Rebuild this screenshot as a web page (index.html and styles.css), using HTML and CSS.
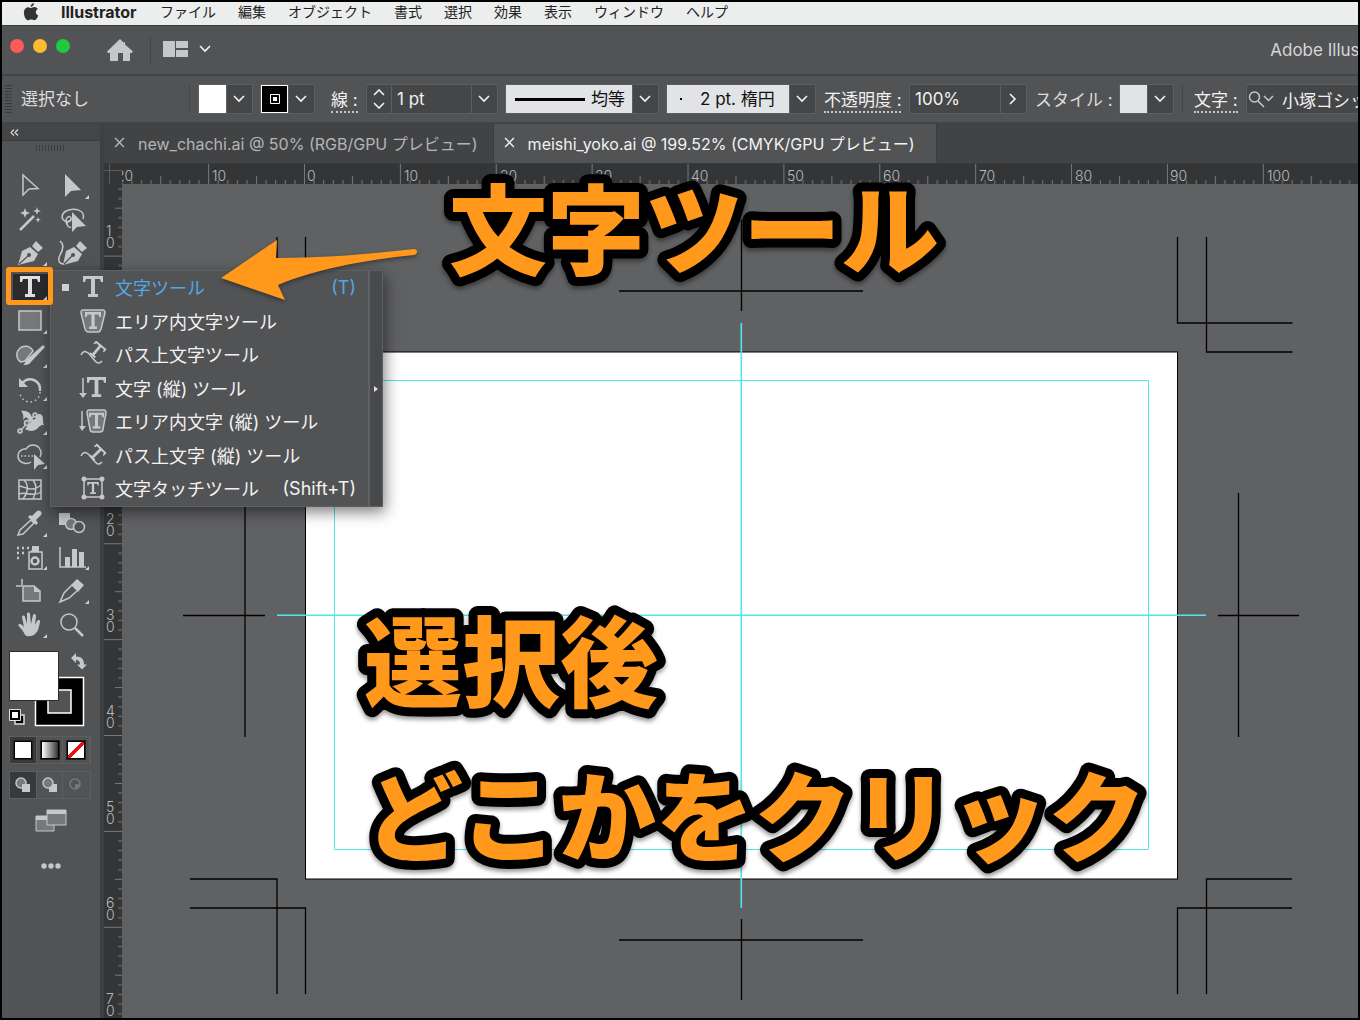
FILE: index.html
```html
<!DOCTYPE html>
<html lang="ja">
<head>
<meta charset="utf-8">
<title>Adobe Illustrator</title>
<link rel="stylesheet" href="styles.css">
</head>
<body>
<svg class="defs" width="0" height="0" aria-hidden="true">
  <symbol id="type" viewBox="0 0 20 21"><path fill="currentColor" d="M0 0h20v6h-2l-1-3h-5v15h3v3H5v-3h3V3H3L2 6H0z"/></symbol>
  <symbol id="down" viewBox="0 0 12 8"><path d="M1 1l5 5 5-5" fill="none" stroke="currentColor" stroke-width="1.600"/></symbol>
  <symbol id="close" viewBox="0 0 10 10"><path d="M1 1l8 8M9 1L1 9" fill="none" stroke="currentColor" stroke-width="1.3"/></symbol>
</svg>
<div class="app">
  <nav class="menubar">
    <svg class="apple" width="16" height="18" viewBox="0 0 16 18"><path fill="#333" d="M11 0c0 2-1.500 3.800-3.400 3.900C7.400 2 9.200.3 11 0zM8 5c.8 0 1.800-.9 3.400-.9 1.300 0 2.600.7 3.300 1.800-2.800 1.600-2.300 5.500.6 6.600-.8 2.300-2.300 4.700-4 4.700-1.200 0-1.700-.7-3-.7s-1.900.7-3 .7C3 17.200.9 13.400.9 9.900.9 6.400 3 4.200 5.200 4.200 6.500 4.200 7.300 5 8 5z"/></svg>
    <a href="#" class="app-name">Illustrator</a>
    <a href="#">ファイル</a><a href="#">編集</a><a href="#">オブジェクト</a><a href="#">書式</a><a href="#">選択</a><a href="#">効果</a><a href="#">表示</a><a href="#">ウィンドウ</a><a href="#">ヘルプ</a>
  </nav>

  <header class="titlebar">
    <div class="lights"><i class="red"></i><i class="yellow"></i><i class="green"></i></div>
    <button class="plain home" aria-label="ホーム"><svg width="26" height="22" viewBox="0 0 26 22"><path fill="#c6c7c8" d="M13 0l4 4V3h1v2.500l8 7-1.500 1.500H23v8h-7v-8h-5v8H3v-8H1L0 12.500z"/></svg></button>
    <span class="rule"></span>
    <button class="plain layout" aria-label="ワークスペース">
      <svg width="26" height="16" viewBox="0 0 26 16"><path fill="#c6c7c8" d="M0 0h12v16H0zM13 0h12v7H13zM13 9h12v7H13z"/></svg>
      <svg width="12" height="8"><use href="#down"/></svg>
    </button>
    <span class="window-title">Adobe Illustrator 2020</span>
  </header>

  <section class="controls">
    <span class="grip-v"></span>
    <span class="status">選択なし</span>
    <span class="rule"></span>
    <div class="group"><button class="swatch white" aria-label="塗り"></button><button class="caret" aria-label="塗りの一覧"><svg width="12" height="8"><use href="#down"/></svg></button></div>
    <div class="group"><button class="swatch stroke" aria-label="線の色"><svg width="10" height="10" viewBox="0 0 10 10"><path fill="#fff" d="M3 3h4v4H3z"/><path d="M.5.5h9v9h-9z" fill="none" stroke="#fff"/></svg></button><button class="caret" aria-label="線の一覧"><svg width="12" height="8"><use href="#down"/></svg></button></div>
    <label class="dotted weight" for="weight">線 :</label>
    <div class="group">
      <button class="stepper" aria-label="線幅の増減"><svg width="12" height="20" viewBox="0 0 12 20"><path d="M1 6l5-5 5 5M1 14l5 5 5-5" fill="none" stroke="#f2f2f2" stroke-width="1.600"/></svg></button>
      <input id="weight" class="field w-weight" value="1 pt"><button class="caret" aria-label="線幅の一覧"><svg width="12" height="8"><use href="#down"/></svg></button>
    </div>
    <div class="group">
      <select class="light profile" aria-label="線幅プロファイル"><option>均等</option></select><button class="caret" aria-label="プロファイルの一覧"><svg width="12" height="8"><use href="#down"/></svg></button>
    </div>
    <div class="group">
      <select class="light brush" aria-label="ブラシ定義"><option>2 pt. 楕円</option></select><button class="caret" aria-label="ブラシの一覧"><svg width="12" height="8"><use href="#down"/></svg></button>
    </div>
    <label class="dotted opacity" for="opacity">不透明度 :</label>
    <div class="group"><input id="opacity" class="field w-opacity" value="100%"><button class="caret" aria-label="不透明度の一覧"><svg width="8" height="12" viewBox="0 0 8 12"><path d="M1 1l5 5-5 5" fill="none" stroke="#f2f2f2" stroke-width="1.600"/></svg></button></div>
    <span class="style-label">スタイル :</span>
    <div class="group"><button class="swatch pale" aria-label="スタイル"></button><button class="caret" aria-label="スタイルの一覧"><svg width="12" height="8"><use href="#down"/></svg></button></div>
    <span class="rule"></span>
    <label class="dotted char" for="font">文字 :</label>
    <div class="group font">
      <svg width="26" height="18" viewBox="0 0 26 18"><g fill="none" stroke="#c6c7c8" stroke-width="1.500"><circle cx="6.500" cy="7" r="5"/><path d="M10 11l6 6M16 6l4.500 4.500L25 6"/></g></svg>
      <input id="font" class="bare" value="小塚ゴシック Pr6N">
    </div>
  </section>

  <main class="workspace">
    <aside class="toolbox">
      <div class="toolbox-head"><svg width="9" height="7" viewBox="0 0 9 7"><path d="M4 .5l-3 3 3 3M8 .5l-3 3 3 3" fill="none" stroke="#d8d8d8" stroke-width="1.200"/></svg></div>
      <span class="grip-h"></span>
      <div class="tools">
        <button class="tool" aria-label="選択"><svg viewBox="0 0 42 34"><path class="l" d="M14 6v20l6-6 9-.5z"/></svg></button>
        <button class="tool more" aria-label="ダイレクト選択"><svg viewBox="0 0 42 34"><path class="f" d="M14 5v23l6-6 10-1z"/></svg></button>
        <button class="tool" aria-label="自動選択"><svg viewBox="0 0 42 34"><path class="l t" d="M11 27l14-14"/><path class="f" d="M16 5l1.300 3.500L21 10l-3.700 1.500L16 15l-1.300-3.500L11 10l3.700-1.500zM28 4l1 3 3 1-3 1-1 3-1-3-3-1 3-1zM29 14l.8 2 2 .8-2 .8-.8 2-.8-2-2-.8 2-.8z"/></svg></button>
        <button class="tool" aria-label="なげなわ"><svg viewBox="0 0 42 34"><path class="l" d="M32 16c3-9-9-12-17-8-5 3-5 8-1 10 3 2 7 0 6-3s-5-1-5 3c0 5 4 7 5 6M19 17c-3 2-4 4-2 6"/><path class="f" d="M21 9v20l5-5 9-1z"/></svg></button>
        <button class="tool more" aria-label="ペン"><svg viewBox="0 0 42 34"><path class="f" d="M23 9l4-5 7 7-5 4zM9 28l4-14 8-4 8 7-4 7z"/><path class="d" d="M10 27l9-8"/><circle class="df" cx="20" cy="18" r="2"/></svg></button>
        <button class="tool" aria-label="曲線"><svg viewBox="0 0 42 34"><path class="f" d="M25 9l4-5 7 7-5 4zM12 28l3-14 8-4 8 7-4 7z"/><path class="d" d="M13 27l8-8"/><circle class="df" cx="22" cy="18" r="2"/><path class="l" d="M9 4c5 4 3 9 0 14-2 4-2 9 4 9"/></svg></button>
        <button class="tool left current more" aria-label="文字"><svg viewBox="0 0 42 34"><use href="#type" x="11" y="6" width="20" height="21"/></svg></button>
        <button class="tool left more" aria-label="長方形"><svg viewBox="0 0 42 34"><path class="l g" d="M10 7h22v19H10z"/></svg></button>
        <button class="tool left more" aria-label="ブロブブラシ"><svg viewBox="0 0 42 34"><path class="l g" d="M12 24a8.500 8.500 0 1 1 12-11l-8 10z"/><path class="f" d="M34 7l2 2-14 15c-2 3-5 3-8 3 2-1 2-4 4-6z"/></svg></button>
        <button class="tool left more" aria-label="回転"><svg viewBox="0 0 42 34"><path class="l t" d="M13 11c8-8 19-2 18 8"/><path class="f" d="M10 6v9h9z"/><path class="l" stroke-dasharray="1.500 3" d="M31 20a10 10 0 0 1-20 0"/></svg></button>
        <button class="tool left more" aria-label="線幅"><svg viewBox="0 0 42 34"><path class="f" d="M12 6c5-1 9 1 11 6 1 4 3 3 4 0 2-5 7-3 7 2 0 3 0 5 1 6-4 0-5 2-7 4-4 3-9 2-12 0l6-7-5-5-3 3c1-4 0-7-2-9z"/><g class="l g"><path d="M11 26L26 10"/><circle cx="11" cy="26" r="2"/><circle cx="18" cy="18" r="2.500"/><circle cx="26" cy="10" r="2"/></g></svg></button>
        <button class="tool left more" aria-label="シェイプ形成"><svg viewBox="0 0 42 34"><path class="l" d="M22 23c-3 2-5 2-7 1a7 7 0 1 1 2-14 8 8 0 0 1 14 8"/><path class="l" stroke-dasharray="1.500 2" d="M12 17h14"/><path class="f" d="M25 15v16l4-5 7-1z"/></svg></button>
        <button class="tool left" aria-label="メッシュ"><svg viewBox="0 0 42 34"><path class="l" d="M10 7h22v19H10zM15 7c6 6 3 14-1 19M24 7c5 6 3 13 0 19M10 13c8 1 12 7 22-1M10 21c7-3 14 4 22-2"/></svg></button>
        <button class="tool more row" aria-label="スポイト"><svg viewBox="0 0 42 34"><path class="l" d="M22 13L11 23l-2 5 5-1 11-11z"/><path class="f" d="M19 10l2-2 2 1 5-5c3-2 6 2 4 4l-5 5 2 3-2 2z"/></svg></button>
        <button class="tool" aria-label="ブレンド"><svg viewBox="0 0 42 34"><path class="f" d="M8 6h11v5l-5 7H8z"/><circle class="l g" cx="20" cy="17" r="5.500"/><circle class="l k" cx="28" cy="20" r="5.500"/></svg></button>
        <button class="tool more" aria-label="シンボルスプレー"><svg viewBox="0 0 42 34"><path class="l" d="M20 11h13v17H20zM22 10h8"/><path class="f" d="M23 5h7v6h-7z"/><circle class="l t" cx="26" cy="20" r="3.500"/><path class="l t" stroke-dasharray="2 3" d="M8 7h12M8 12h8M8 17h3"/></svg></button>
        <button class="tool more" aria-label="棒グラフ"><svg viewBox="0 0 42 34"><path class="l" d="M9 6v20h26"/><path class="f" d="M14 16h5v10h-5zM21 8h5v18h-5zM28 11h5v15h-5z"/></svg></button>
        <button class="tool" aria-label="アートボード"><svg viewBox="0 0 42 34"><path class="l" d="M7 12h6M13 5v6"/><path class="l g" d="M14 12h11l6 5v10H14z"/><path class="f" d="M25 12v6h6z"/></svg></button>
        <button class="tool more" aria-label="スライス"><svg viewBox="0 0 42 34"><path class="l" d="M21 11L13 19 9 28l9-4 8-7"/><path class="f" d="M20 11l6-6 7 6-6 7z"/></svg></button>
        <button class="tool more" aria-label="手のひら"><svg viewBox="0 0 42 34"><path class="f" d="M16 27c-2-5-5-7-7-10 1-2 4-1 6 2l-2-10c0-2 3-2 3 0l2 7V6c0-2 3-2 3 0l1 10 2-9c1-2 3-1 3 1l-1 9 2-4c1-2 4-1 3 1-1 5-2 9-4 11-3 4-9 4-11 2z"/></svg></button>
        <button class="tool" aria-label="ズーム"><svg viewBox="0 0 42 34"><circle class="l" cx="18" cy="14" r="8"/><path class="l t" d="M24 20l8 8"/></svg></button>
      </div>
      <svg class="colors" width="84" height="78" viewBox="0 0 84 78">
        <path d="M26.500 26.500h48v48h-48zM39 39v23h23V39z" fill="#000" fill-rule="evenodd" stroke="#fff" stroke-width="1.500"/>
        <path d="M.5.5h49v49H.5z" fill="#fff" stroke="#2c2c2e"/>
        <path d="M62 7l5-5v3.500c6 0 8 3 8 8h3l-5 5-5-5h3c0-3-1-4.500-4-4.500v3z" fill="#c6c7c8"/>
        <path d="M6 64h9v9H6z" fill="#000" stroke="#ddd" stroke-width="1.500"/><path d="M2 60h8v8H2z" fill="#fff" stroke="#000" stroke-width="2"/><path d="M.5 58.500h11v11H.5z" fill="none" stroke="#ddd"/>
      </svg>
      <div class="modes">
        <button class="on" aria-label="カラー"><i class="chip solid"></i></button>
        <button aria-label="グラデーション"><i class="chip gradient"></i></button>
        <button aria-label="なし"><i class="chip none"></i></button>
      </div>
      <div class="modes draw">
        <button class="on" aria-label="標準描画"><svg width="18" height="16" viewBox="0 0 18 16"><circle class="l g" cx="7" cy="6" r="5"/><path class="f" d="M8 7h8v8H8z"/></svg></button>
        <button aria-label="背面描画"><svg width="18" height="16" viewBox="0 0 18 16"><path class="f" d="M8 7h8v8H8z"/><circle class="l g" cx="7" cy="6" r="5"/></svg></button>
        <button class="dim" aria-label="内側描画"><svg width="18" height="16" viewBox="0 0 18 16"><circle class="l" cx="8" cy="7" r="5"/><path class="f" d="M8 7h4v4H8z"/></svg></button>
      </div>
      <button class="plain screen" aria-label="スクリーンモード"><svg width="32" height="24" viewBox="0 0 32 24"><path d="M1 7h18v15H1z" fill="#77787a" stroke="#c6c7c8"/><path class="f" d="M1 7h18v4H1z"/><path d="M12 1h19v15H12z" fill="#77787a" stroke="#c6c7c8"/><path class="f" d="M12 1h19v4H12z"/></svg></button>
      <button class="plain dots" aria-label="ツールバーを編集"><svg width="20" height="6" viewBox="0 0 20 6"><g class="f"><circle cx="3" cy="3" r="2.700"/><circle cx="10" cy="3" r="2.700"/><circle cx="17" cy="3" r="2.700"/></g></svg></button>
    </aside>

    <div class="document">
      <div class="tabs">
        <button class="tab"><svg width="11" height="11"><use href="#close"/></svg>new_chachi.ai @ 50% (RGB/GPU プレビュー)</button>
        <button class="tab active"><svg width="11" height="11"><use href="#close"/></svg>meishi_yoko.ai @ 199.52% (CMYK/GPU プレビュー)</button>
      </div>
      <div class="stage">
        <div class="corner"></div>
        <div class="ruler-x"><svg width="100%" height="20">
          <pattern id="tx" x="182" width="95.880" height="20" patternUnits="userSpaceOnUse"><path stroke="#77787a" d="M.5 0v20M48.500 12v8M10.100 16v4M19.700 16v4M29.300 16v4M38.900 16v4M58 16v4M67.600 16v4M77.200 16v4M86.800 16v4"/></pattern>
          <rect width="100%" height="20" fill="url(#tx)"/>
          <g class="num"><text x="-6" y="17">20</text><text x="90" y="17">10</text><text x="185" y="17">0</text><text x="282" y="17">10</text><text x="378" y="17">20</text><text x="473" y="17">30</text><text x="569" y="17">40</text><text x="665" y="17">50</text><text x="761" y="17">60</text><text x="857" y="17">70</text><text x="953" y="17">80</text><text x="1048" y="17">90</text><text x="1145" y="17">100</text></g>
        </svg></div>
        <div class="ruler-y"><svg width="18" height="100%">
          <pattern id="ty" y="167.500" width="18" height="95.880" patternUnits="userSpaceOnUse"><path stroke="#77787a" d="M0 .5h18M11 48.500h7M14 10.100h4M14 19.700h4M14 29.300h4M14 38.900h4M14 58h4M14 67.600h4M14 77.200h4M14 86.800h4"/></pattern>
          <rect width="18" height="100%" fill="url(#ty)"/>
          <g class="num"><text x="2" y="52">1</text><text x="2" y="64">0</text><text x="2" y="340">2</text><text x="2" y="352">0</text><text x="2" y="436">3</text><text x="2" y="448">0</text><text x="2" y="532">4</text><text x="2" y="544">0</text><text x="2" y="628">5</text><text x="2" y="640">0</text><text x="2" y="724">6</text><text x="2" y="736">0</text><text x="2" y="820">7</text><text x="2" y="832">0</text></g>
        </svg></div>
        <div class="canvas">
          <svg class="artwork" width="1236" height="834" viewBox="122 184 1236 834">
            <rect x="305.500" y="352" width="872" height="527" fill="#fff" stroke="#000"/>
            <g fill="none" stroke="#000" stroke-width="1.300">
              <path d="M305.500 237v86.500H190M277 237v115H190M1177.500 237v86h115M1206.500 237v115h86M190 879h87v115M190 908h115.500v86M1292 879h-85.500v115M1292 908h-114.500v86M619 291h244M741.500 220v91M619 940h244M741.500 919v81M245 493v244M183 615.500h82M1238.500 493v244M1218 615.500h81"/>
            </g>
            <g fill="none" stroke="#4fe8ea">
              <path d="M334.500 380.500h814v469h-814z"/>
              <path stroke-width="1.600" d="M741.300 323v585M277 615.300h929"/>
            </g>
          </svg>
        </div>
      </div>
    </div>

    <div class="flyout">
      <ul>
        <li><button class="item chosen"><i class="mark"></i><svg viewBox="0 0 28 26"><use href="#type" x="4" y="2" width="20" height="21"/></svg><span>文字ツール</span><kbd>(T)</kbd></button></li>
        <li><button class="item"><svg viewBox="0 0 28 26"><path class="l g" d="M4 2h20c2 0 2 2 2 3l-4 16c-1 3-2 3-3 3H9c-2 0-2-1-3-3L2 5c0-2 0-3 2-3z"/><use href="#type" x="6" y="4" width="16" height="17"/></svg><span>エリア内文字ツール</span></button></li>
        <li><button class="item"><svg viewBox="0 0 28 26"><path class="l" d="M2 14c3-6 7-3 10 1 4 5 7 10 11 5"/><use href="#type" x="11" y="2" width="14" height="15" transform="rotate(40 18 9)"/></svg><span>パス上文字ツール</span></button></li>
        <li><button class="item"><svg viewBox="0 0 28 26"><path class="l" d="M4 3v16"/><path class="f" d="M0 18h8l-4 5z"/><use href="#type" x="8" y="2" width="19" height="20"/></svg><span>文字 (縦) ツール</span></button></li>
        <li><button class="item"><svg viewBox="0 0 28 26"><path class="l" d="M3 3v16"/><path class="f" d="M0 18h7l-4 5z"/><path class="l g" d="M10 2h15c2 0 2 2 2 3l-3 16c0 2-1 3-3 3h-7c-2 0-3-1-3-3L8 5c0-2 0-3 2-3z"/><use href="#type" x="10" y="4" width="15" height="17"/></svg><span>エリア内文字 (縦) ツール</span></button></li>
        <li><button class="item"><svg viewBox="0 0 28 26"><path class="l" d="M2 14c3-6 7-3 10 1 4 5 7 10 11 5"/><use href="#type" x="11" y="4" width="14" height="15" transform="rotate(45 18 11)"/></svg><span>パス上文字 (縦) ツール</span></button></li>
        <li><button class="item"><svg viewBox="0 0 28 26"><path class="l" d="M5 4h18v18H5z"/><g class="f"><circle cx="5" cy="4" r="2.500"/><circle cx="23" cy="4" r="2.500"/><circle cx="5" cy="22" r="2.500"/><circle cx="23" cy="22" r="2.500"/></g><use href="#type" x="8" y="7" width="12" height="12"/></svg><span>文字タッチツール</span><kbd>(Shift+T)</kbd></button></li>
      </ul>
      <button class="tearoff" aria-label="切り離す"><svg width="5" height="8" viewBox="0 0 5 8"><path fill="#e0e0e0" d="M0 1l4 3-4 3z"/></svg></button>
    </div>

    <span class="highlight"></span>
    <svg class="arrow" width="200" height="66" viewBox="219 238 200 66"><path fill="#ff981b" d="M221 278l56-38-1 18c48 0 94-4 138-9 4 0 4 5 0 6-49 5-98 14-136 30l7 15z"/></svg>
    <svg class="notes" width="100%" height="100%">
      <text x="447" y="143">文字ツール</text>
      <text x="362" y="575">選択後</text>
      <text x="363" y="730">どこかをクリック</text>
    </svg>
  </main>
</div>
</body>
</html>
```

FILE: styles.css
```css
* { box-sizing: border-box; }
body {
  margin: 0;
  background: #000;
  color: #f2f2f2;
  font-family: Inter, "Noto Sans CJK JP", sans-serif;
  font-size: 17px;
}
button, input, select { font: inherit; color: inherit; margin: 0; padding: 0; border: 0; border-radius: 0; background: none; }
svg { display: block; flex: none; }
.defs { position: absolute; }
.app {
  display: flex;
  flex-direction: column;
  min-height: 100vh;
  border: 2px solid #000;
  background: #525355;
  overflow: hidden;
}

.l { fill: none; stroke: #c6c7c8; stroke-width: 1.5; }
.l.t { stroke-width: 2.5; }
.g { fill: #77787a; }
.k { fill: #525355; }
.f { fill: #c6c7c8; }
.d { fill: none; stroke: #525355; stroke-width: 1.2; }
.df { fill: #525355; }

.menubar {
  display: flex;
  align-items: center;
  gap: 22px;
  height: 23px;
  padding: 0 0 3px 21px;
  background: #eceeed;
  font-size: 14px;
  line-height: 20px;
}
.menubar a { color: #222; text-decoration: none; white-space: nowrap; }
.menubar .app-name { width: 77px; font-size: 16px; font-weight: 700; }

.titlebar {
  display: flex;
  align-items: center;
  height: 51px;
  padding-left: 8px;
  border-top: 1px solid #3c3d3f;
  border-bottom: 2px solid #434446;
  overflow: hidden;
}
.lights { display: flex; gap: 9px; margin-bottom: 8px; }
.lights i { width: 14px; height: 14px; border-radius: 50%; }
.red { background: #fc5b57; }
.yellow { background: #fdbc2e; }
.green { background: #1fca3c; }
.rule { width: 1px; height: 28px; background: #454648; flex: none; }
.plain { display: flex; align-items: center; }
.home { margin: 0 17px 0 37px; }
.layout { gap: 10px; margin-left: 12px; margin-bottom: 3px; }
.window-title { margin-left: auto; margin-right: -92px; white-space: nowrap; color: #d6d6d7; }

.controls {
  display: flex;
  align-items: center;
  gap: 9px;
  height: 48px;
  padding-left: 3px;
  border-bottom: 2px solid #434446;
  white-space: nowrap;
  overflow: hidden;
}
.controls > * { flex: none; }
.grip-v { width: 7px; height: 28px; background: repeating-linear-gradient(#3a3b3d 0 1px, transparent 1px 3px); }
.status { width: 159px; padding-bottom: 3px; color: #dcdcdd; }
.group { display: flex; align-items: center; height: 28px; background: #454648; outline: 1px solid #5d5e60; }
.swatch { width: 27px; height: 28px; }
.swatch.white { background: #fff; }
.swatch.pale { background: #e2e3e6; }
.swatch.stroke { display: grid; place-items: center; background: #000; border: 1px solid #fff; }
.caret, .stepper { display: grid; place-items: center; width: 26px; height: 28px; padding-right: 1px; border-left: 1px solid #5d5e60; }
.stepper { width: 24px; border: 0; }
.field { height: 28px; border-left: 1px solid #5d5e60; padding-left: 5px; }
.w-weight { width: 80px; }
.w-opacity { width: 90px; border: 0; }
.dotted { line-height: 22px; border-bottom: 2px dotted #c6c7c8; margin-top: 4px; }
.weight { margin-left: 8px; width: 27px; }
.opacity { width: 77px; }
.char { margin-left: 2px; width: 44px; }
.style-label { width: 76px; padding-bottom: 2px; color: #dcdcdd; }
.light { appearance: none; height: 28px; background: #e2e3e6; color: #111; }
.profile {
  width: 126px;
  padding-left: 85px;
  background: linear-gradient(#000, #000) 9px 13px / 70px 3px no-repeat #e2e3e6;
}
.brush {
  width: 122px;
  padding-left: 33px;
  background: linear-gradient(#000, #000) 13px 13px / 2px 2px no-repeat #e2e3e6;
}
.font { width: 240px; padding-left: 1px; gap: 8px; }
.bare { width: 190px; height: 28px; }

.workspace { position: relative; display: flex; flex: 1; }
.toolbox { width: 98px; padding-bottom: 20px; background: #525355; flex: none; }
.toolbox-head { height: 17px; padding: 5px 0 0 8px; background: #444547; border-bottom: 1px solid #3a3b3d; }
.grip-h { display: block; width: 28px; height: 6px; margin: 4px 0 18px 34px; background: repeating-linear-gradient(90deg, #3a3b3d 0 1px, transparent 1px 3px); }
.tools { display: grid; grid-template-columns: 42px 42px; grid-template-rows: repeat(14, minmax(0, 1fr)); height: 473px; padding-left: 7px; }
.tool { position: relative; min-height: 0; color: #c6c7c8; }
.tool svg { width: 42px; height: 34px; }
.tool.left, .tool.row { grid-column: 1; }
.tool.more::after {
  content: "";
  position: absolute;
  right: 4px;
  bottom: 4px;
  border: 2px solid;
  border-color: transparent #d0d0d0 #d0d0d0 transparent;
}
.current { background: linear-gradient(#2a2b2d, #2a2b2d) 4px 4px / 36px 26px no-repeat; color: #e0e0e0; }
.colors { margin: 9px 0 0 7px; }
.modes { display: flex; width: 82px; height: 28px; margin: 7px 0 0 7px; border: 1px solid #5d5e60; }
.modes button { display: grid; place-items: center; flex: 1; border-right: 1px solid #5d5e60; }
.modes .on { background: #38393b; }
.modes .dim { opacity: .3; }
.chip { width: 18px; height: 18px; border: 1px solid #000; outline: 1px solid #222; }
.solid { background: #fff; }
.gradient { background: linear-gradient(90deg, #fff, #333); }
.none { background: linear-gradient(to bottom right, #fff 42%, #e81010 42% 58%, #fff 58%); }
.screen { margin: 10px 0 0 33px; }
.dots { margin: 30px 0 0 39px; }

.document { display: flex; flex-direction: column; flex: 1; min-width: 0; border-left: 4px solid #3f4042; }
.tabs { display: flex; height: 40px; background: #424345; border-bottom: 1px solid #38393b; overflow: hidden; }
.tab { display: flex; align-items: center; flex: none; gap: 13px; padding: 0 15px 2px 10px; font-size: 16px; white-space: nowrap; color: #b4b5b6; border-right: 1px solid #3a3b3d; }
.tab.active { padding-right: 21px; background: #525355; color: #f2f2f2; }
.stage { display: grid; grid-template: 20px 1fr / 18px 1fr; flex: 1; }
.corner { background: linear-gradient(#5a5b5d, #5a5b5d) 5px 0 / 1px 20px no-repeat, linear-gradient(#5a5b5d, #5a5b5d) 0 6px / 18px 1px no-repeat #343537; }
.ruler-x, .ruler-y, .canvas { position: relative; overflow: hidden; background: #343537; }
.ruler-x svg, .ruler-y svg, .artwork { position: absolute; top: 0; left: 0; }
.num { fill: #b8b9ba; font-size: 14px; font-weight: 300; }
.canvas { background: #606163; }

.flyout {
  position: absolute;
  left: 48px;
  top: 146px;
  display: flex;
  width: 333px;
  background: #525355;
  border: 1px solid #5f6062;
  box-shadow: 2px 5px 14px rgba(0, 0, 0, .5);
}
.flyout ul {
  display: grid;
  grid-template-rows: repeat(7, minmax(0, 1fr));
  flex: 1;
  height: 235px;
  margin: 0;
  padding: 0;
  list-style: none;
}
.item { position: relative; display: flex; align-items: center; width: 100%; height: 32px; padding: 0 12px 0 28px; font-size: 18px; text-align: left; white-space: nowrap; }
.item svg { width: 28px; height: 26px; margin-right: 8px; color: #c6c7c8; }
.item kbd { margin-left: auto; font: inherit; }
.chosen { color: #4fa8e8; }
.mark { position: absolute; left: 11px; top: 13px; width: 7px; height: 7px; background: #d0d0d0; }
.tearoff { display: grid; place-items: center; width: 14px; background: #48494b; border-left: 2px solid #5f6062; }

.highlight { position: absolute; left: 4px; top: 143px; width: 47px; height: 38px; border: 5px solid #ff981b; border-radius: 3px; }
.arrow { position: absolute; left: 217px; top: 114px; filter: drop-shadow(0 2px 2px rgba(0, 0, 0, .4)); }
.notes {
  position: absolute;
  top: 0;
  left: 0;
  overflow: visible;
  pointer-events: none;
  fill: #ff981b;
  font-size: 98px;
  font-weight: 900;
  stroke: #000;
  stroke-width: 18px;
  stroke-linejoin: round;
  paint-order: stroke fill;
  filter: drop-shadow(0 3px 2px rgba(0, 0, 0, .4));
}
```
